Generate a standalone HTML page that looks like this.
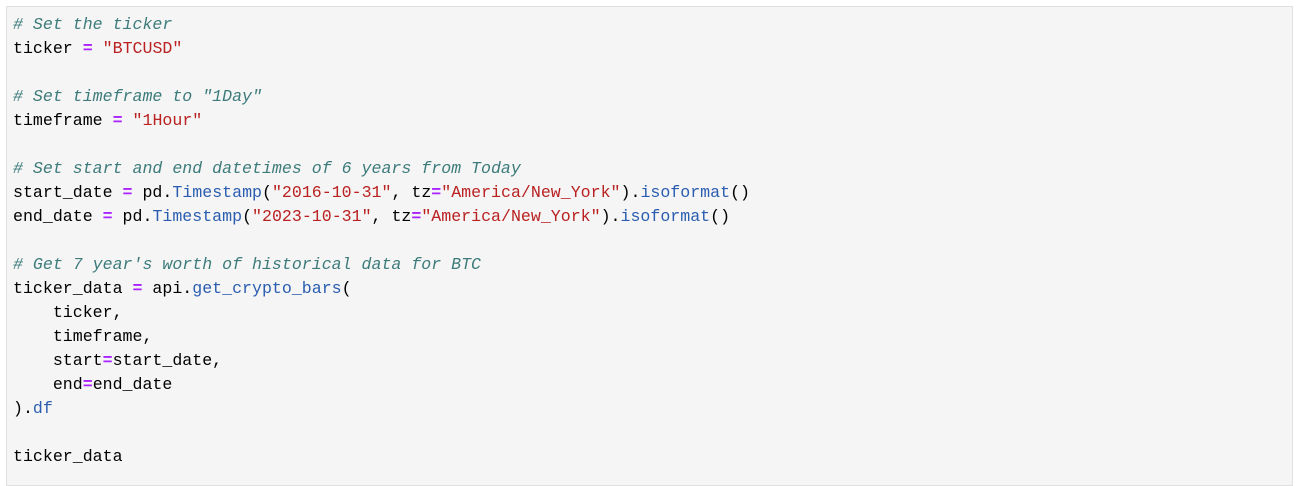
<!DOCTYPE html>
<html><head><style>
body{margin:0;background:#fff;width:1304px;height:470px;overflow:hidden}
.box{position:absolute;left:6px;top:6px;width:1287px;height:480px;background:#f5f5f5;border:1px solid #e0e0e0;box-sizing:border-box}
pre{margin:0;position:absolute;left:13px;top:13px;font-family:"Liberation Mono",monospace;font-size:16.6px;line-height:24px;color:#000}
.c{color:#3d7b7b;font-style:italic}
.s{color:#ba2121}
.o{color:#aa22ff;font-weight:bold}
.f{color:#2a5db0}
</style></head><body>
<div class="box"></div>
<pre><span class="c"># Set the ticker</span>
ticker <span class="o">=</span> <span class="s">"BTCUSD"</span>

<span class="c"># Set timeframe to "1Day"</span>
timeframe <span class="o">=</span> <span class="s">"1Hour"</span>

<span class="c"># Set start and end datetimes of 6 years from Today</span>
start_date <span class="o">=</span> pd.<span class="f">Timestamp</span>(<span class="s">"2016-10-31"</span>, tz<span class="o">=</span><span class="s">"America/New_York"</span>).<span class="f">isoformat</span>()
end_date <span class="o">=</span> pd.<span class="f">Timestamp</span>(<span class="s">"2023-10-31"</span>, tz<span class="o">=</span><span class="s">"America/New_York"</span>).<span class="f">isoformat</span>()

<span class="c"># Get 7 year's worth of historical data for BTC</span>
ticker_data <span class="o">=</span> api.<span class="f">get_crypto_bars</span>(
    ticker,
    timeframe,
    start<span class="o">=</span>start_date,
    end<span class="o">=</span>end_date
).<span class="f">df</span>

ticker_data</pre>
</body></html>
